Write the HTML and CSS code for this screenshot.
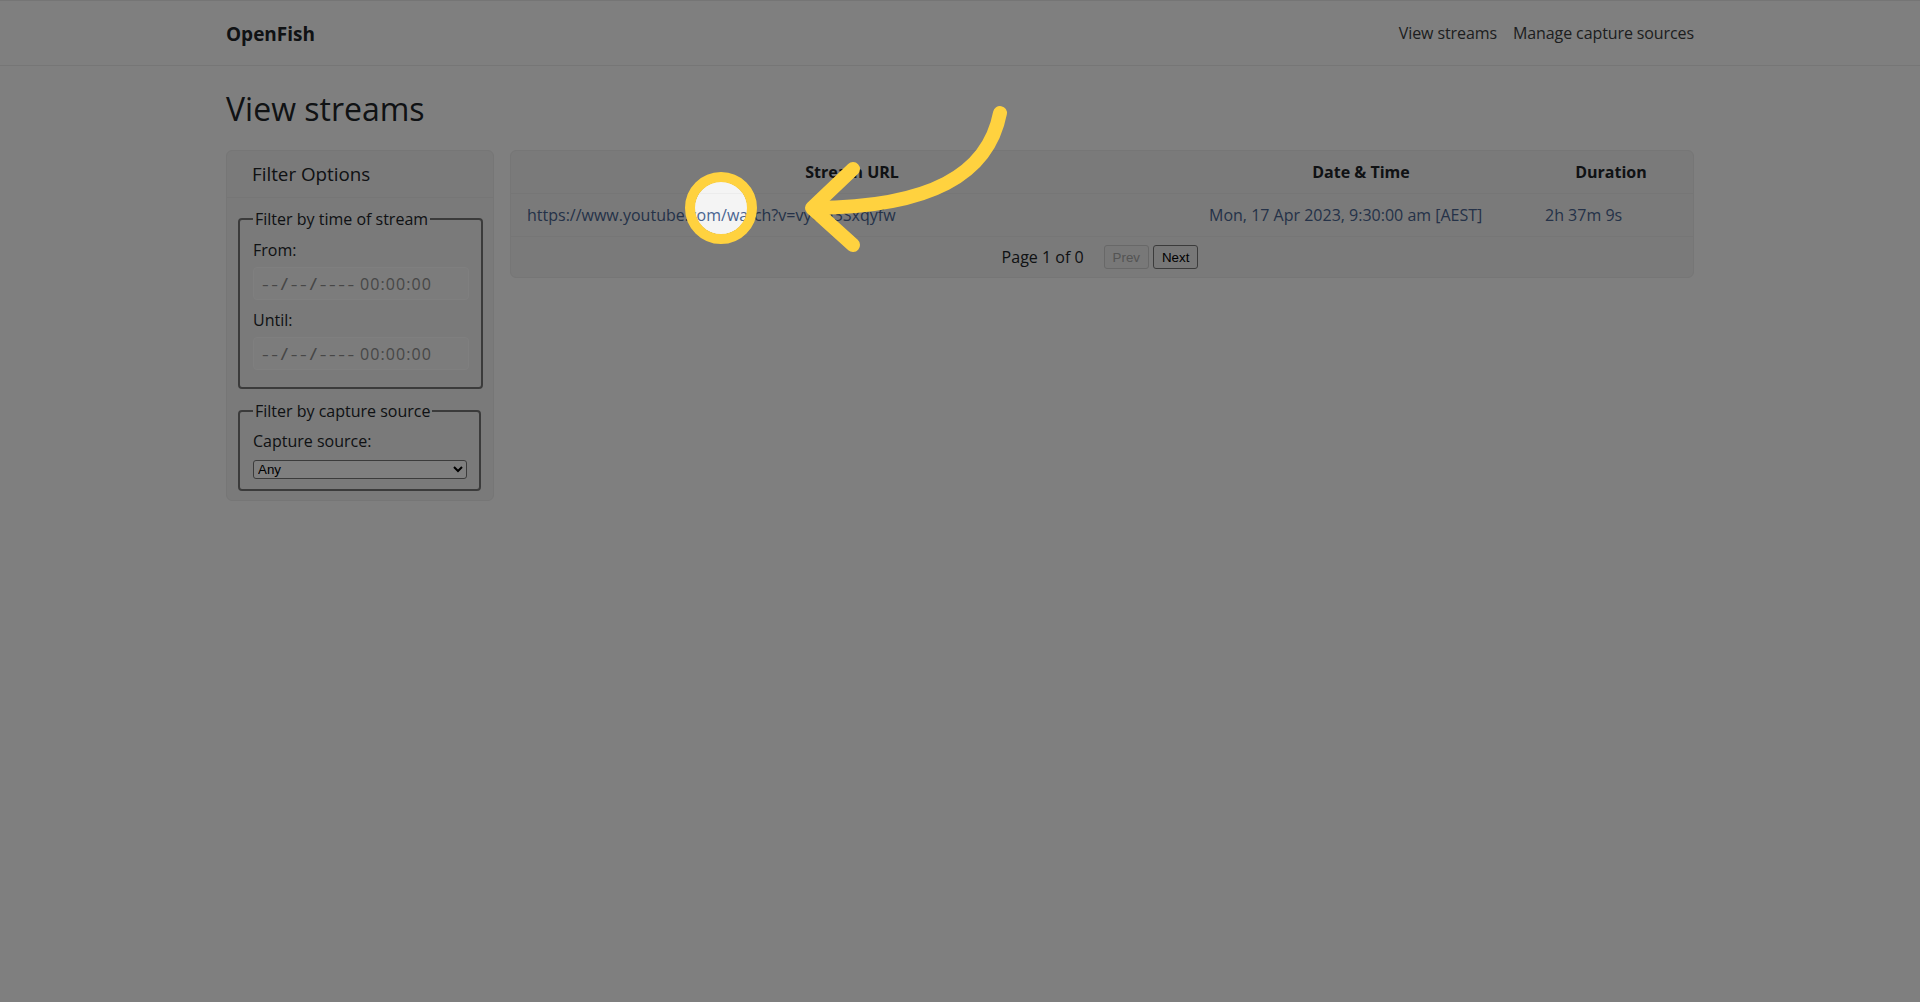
FILE: index.html
```html
<!DOCTYPE html>
<html lang="en">
<head>
<meta charset="utf-8">
<title>OpenFish - View streams</title>
<link rel="stylesheet" href="styles.css">
</head>
<body>
<nav class="navbar">
  <div class="container nav-inner">
    <a class="brand" href="#">OpenFish</a>
    <div class="nav-links">
      <a href="#">View streams</a>
      <a href="#">Manage capture sources</a>
    </div>
  </div>
</nav>
<main class="container">
  <h1 class="page-title">View streams</h1>
  <div class="content-row">
    <aside class="card filter-card">
      <div class="card-header">Filter Options</div>
      <div class="card-body">
        <fieldset class="fs fs-time">
          <legend>Filter by time of stream</legend>
          <label class="lbl">From:</label>
          <div class="dt-input"><span class="dt-date">--/--/----</span> <span class="dt-time">00:00:00</span></div>
          <label class="lbl lbl-gap">Until:</label>
          <div class="dt-input"><span class="dt-date">--/--/----</span> <span class="dt-time">00:00:00</span></div>
        </fieldset>
        <fieldset class="fs fs-source">
          <legend>Filter by capture source</legend>
          <label class="lbl">Capture source:</label>
          <select class="src-select"><option>Any</option></select>
        </fieldset>
      </div>
    </aside>
    <section class="card table-card">
      <table class="streams">
        <colgroup><col class="c1"><col class="c2"><col class="c3"></colgroup>
        <thead>
          <tr><th>Stream URL</th><th>Date &amp; Time</th><th>Duration</th></tr>
        </thead>
        <tbody>
          <tr>
            <td><a href="#">https://www.youtube.com/watch?v=vyQh3Sxqyfw</a></td>
            <td><a href="#">Mon, 17 Apr 2023, 9:30:00 am [AEST]</a></td>
            <td><a href="#">2h 37m 9s</a></td>
          </tr>
        </tbody>
      </table>
      <div class="pager">
        <span class="pager-text">Page 1 of 0</span>
        <button class="btn" disabled>Prev</button>
        <button class="btn">Next</button>
      </div>
    </section>
  </div>
</main>
<div class="overlay"></div>
<svg class="annot" width="1920" height="1002" viewBox="0 0 1920 1002">
  <circle cx="721" cy="208" r="31" fill="none" stroke="#FFD23F" stroke-width="10"/>
  <path d="M1000,113 C988,175 930,207 815,208" fill="none" stroke="#FFD23F" stroke-width="14" stroke-linecap="round"/>
  <path d="M853,169 L812,208 L853,245" fill="none" stroke="#FFD23F" stroke-width="14" stroke-linecap="round" stroke-linejoin="round"/>
</svg>
</body>
</html>
```
FILE: styles.css
```css
* { box-sizing: border-box; }
html, body { margin: 0; padding: 0; }
body {
  font-family: "Open Sans", "Liberation Sans", sans-serif;
  font-size: 16px;
  line-height: 24px;
  color: #212529;
  background: #ffffff;
}
a { text-decoration: none; }
.container { width: 1468px; margin: 0 auto; }

.navbar {
  border-top: 1px solid #eaeaea;
  border-bottom: 1px solid #ececec;
  height: 66px;
}
.nav-inner { display: flex; justify-content: space-between; align-items: flex-start; }
.brand {
  margin-top: 18px;
  font-size: 19px;
  line-height: 30px;
  font-weight: 700;
  color: #212529;
}
.nav-links { margin-top: 20px; display: flex; gap: 16px; }
.nav-links a { color: #3a3d40; letter-spacing: -0.1px; }

.page-title {
  margin: 24px 0 22px;
  font-size: 32px;
  line-height: 38px;
  font-weight: 400;
}

.content-row { display: flex; gap: 16px; align-items: flex-start; }
.card {
  background: #f4f4f4;
  border: 1px solid #ececec;
  border-radius: 6px;
}
.filter-card { width: 268px; }
.card-header {
  padding: 11px 25px 11px;
  font-size: 18.8px;
  line-height: 24px;
  border-bottom: 1px solid #ececec;
}
.card-body { padding: 9px 10px 9px 11px; }
.fs {
  width: fit-content;
  margin: 0;
  border: 2px solid #777777;
  border-radius: 4px;
}
.fs-time { padding: 7px 12px 17px 13px; }
.fs legend { padding: 0 2px; font-size: 16px; line-height: 24px; }
.fs-source { margin-top: 10px; padding: 6px 12px 10px 13px; }
.lbl { display: block; margin-bottom: 5px; }
.lbl-gap { margin-top: 8px; }
.dt-input {
  width: 216px;
  height: 33px;
  display: flex;
  align-items: center;
  gap: 6px;
  padding-left: 8px;
  background: #f8f8f8;
  border: 1px solid #ffffff;
  border-radius: 4px;
  color: #8e8e8e;
  white-space: nowrap;
}
.dt-date {
  display: inline-block;
  letter-spacing: 2px;
  transform: scaleX(1.3);
  transform-origin: left center;
  margin-right: 19px;
}
.dt-time { letter-spacing: 1.1px; }
.src-select {
  display: block;
  margin-top: 7px;
  width: 214px;
  height: 19px;
  font-family: "Liberation Sans", Arial, sans-serif;
  font-size: 13.33px;
  color: #000;
  background: #ffffff;
  border: 1px solid #767676;
  border-radius: 3px;
}

.table-card { flex: 1; }
.streams { width: 100%; border-collapse: collapse; table-layout: fixed; }
.c1 { width: 682px; }
.c2 { width: 336px; }
.c3 { width: auto; }
.streams th {
  font-weight: 700;
  text-align: center;
  padding: 9px 16px;
  border-bottom: 1px solid #ececec;
}
.streams td {
  padding: 9px 16px;
  border-bottom: 1px solid #ececec;
  white-space: nowrap;
}
.streams td a { color: #4a6591; }
.pager {
  height: 40px;
  display: flex;
  align-items: center;
  justify-content: center;
}
.pager-text { margin-right: 20px; }
.btn {
  height: 24px;
  padding: 0 8px;
  font-family: "Liberation Sans", Arial, sans-serif;
  font-size: 13.33px;
  color: #000;
  background: #efefef;
  border: 1px solid #767676;
  border-radius: 3px;
  margin-right: 4px;
}
.btn:disabled { color: #a8a8a8; border-color: #d0d0d0; background: #f0f0f0; }

.overlay {
  position: fixed;
  inset: 0;
  background: radial-gradient(circle at 721px 208px, rgba(0,0,0,0) 26px, rgba(0,0,0,0.5) 26.5px);
  pointer-events: none;
}
.annot { position: fixed; left: 0; top: 0; pointer-events: none; }
```
